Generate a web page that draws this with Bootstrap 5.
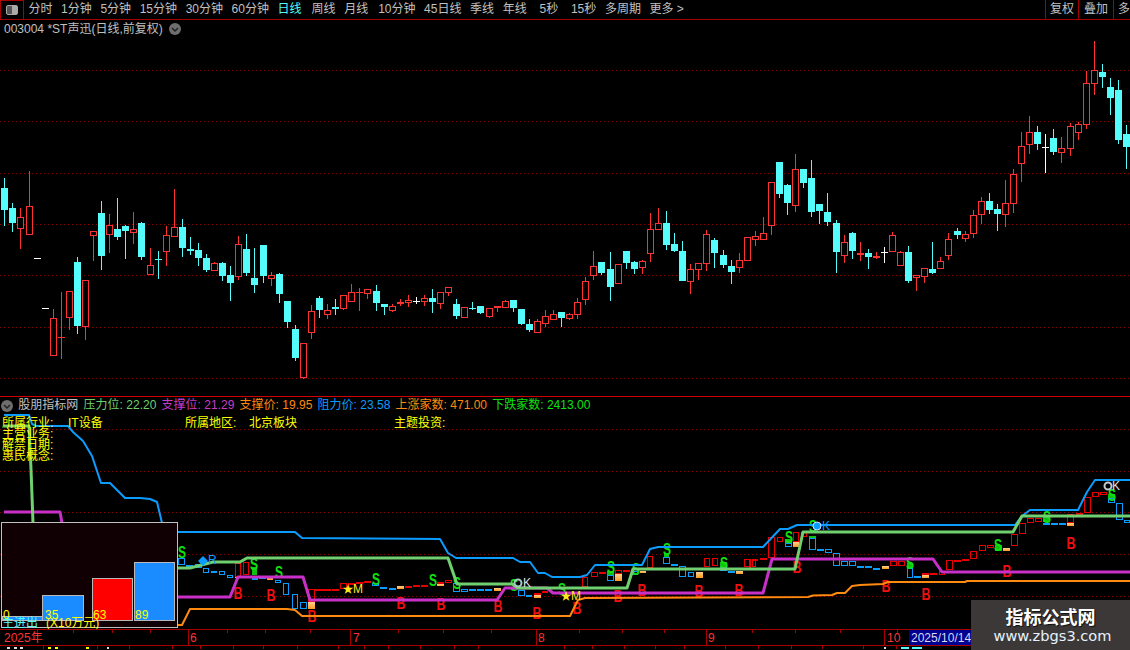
<!DOCTYPE html>
<html lang="zh">
<head>
<meta charset="utf-8">
<title>003004 *ST声迅</title>
<link href="https://cdn.jsdelivr.net/npm/bootstrap@5.3.0/dist/css/bootstrap.min.css" rel="stylesheet">
<style>
html,body{background:#000;margin:0;height:100%;overflow:hidden}
.term{width:1130px;height:650px;background:#000;overflow:hidden;font:12px/16px "Liberation Sans","Noto Sans CJK SC",sans-serif;color:#c0c0c0}
.tbar{height:20px;border-bottom:1px solid #a80000;flex:none}
.tico{width:24px;height:19px;border:1px solid #a80000;border-width:1px 1px 0 1px;flex:none}
.tico i{display:block;width:12px;height:10px;border:1px solid #aaa;border-radius:2px;background:linear-gradient(90deg,#555 55%,#aaa 55%)}
.tbar .nav-link{padding:0 4.3px;color:#c0c0c0;line-height:19px;font-size:12px;white-space:nowrap}
.tbar .nav-link:first-child{padding-left:4.5px}
.tbar .nav-link.on{color:#54fcfc}
.tbar .nudge1{margin-left:1.4px}
.tbar .nudge4{margin-left:4.2px}
.sidebox{flex:none;width:85px}
.tside{border-left:1px solid #a80000;line-height:19px;flex:none;white-space:nowrap;overflow:hidden}
.ts1{width:33px;padding-left:4px}.ts2{width:35px;padding-left:5px}.ts3{width:17px;padding-left:4px}
.mainp{height:376px;flex:none}
.mainp svg,.indp svg,.axisp svg{display:block}
.ttl{left:4px;top:1px;color:#c0c0c0;white-space:nowrap;gap:6px}
.cico{width:12px;height:12px;border-radius:50%;background:#6e6e6e;flex:none}
.cico svg{display:block;width:12px;height:12px}
.inhd{height:18px;border-top:1px solid #d00000;flex:none;padding-left:1px;white-space:nowrap;line-height:17px}
.inhd .itm{margin-left:5.3px}
.cgreen{color:#70d070}.cmag{color:#c83cc8}.corg{color:#ff8a10}.cblue{color:#0a9dff}.cup{color:#ff8a10}.cdn{color:#10e010}
.indp{height:215px;flex:none}
.ymemo{left:2px;top:3.5px;color:#ff0;line-height:11px;white-space:nowrap}
.ymemo .lab1{width:66px}.ymemo .lab2{width:117px}.ymemo .lab3{width:145px}.ymemo .lab4{width:64px}
.axisp{height:20px;flex:none}
.wmark{right:0;bottom:0;width:159px;height:50px;background:#3b3837;color:#fff;text-align:center}
.wmark .w1{font:700 18px/20px "Noto Sans CJK SC",sans-serif;margin-top:6px;text-shadow:1px 1px 1px #111}
.wmark .w2{font:14.6px/20px "DejaVu Sans",sans-serif;color:#e6f2ff;margin-left:4px}
.tS{fill:#10e010;font:700 16.5px "Liberation Sans",sans-serif}
.tB{fill:#f01010;font:700 16.5px "Liberation Sans",sans-serif}
.tK{font:12px "Liberation Sans",sans-serif}
.hlab{fill:#ff0;font:12px "Liberation Sans",sans-serif}
</style>
</head>
<body>
<div class="term d-flex flex-column position-relative">
  <div class="tbar d-flex align-items-stretch">
    <div class="tico d-flex align-items-center justify-content-center"><i></i></div>
    <nav class="nav flex-nowrap flex-grow-1">
      <a class="nav-link" href="#">分时</a><a class="nav-link" href="#">1分钟</a><a class="nav-link" href="#">5分钟</a><a class="nav-link" href="#">15分钟</a><a class="nav-link" href="#">30分钟</a><a class="nav-link" href="#">60分钟</a><a class="nav-link on" href="#">日线</a><a class="nav-link nudge1" href="#">周线</a><a class="nav-link" href="#">月线</a><a class="nav-link nudge1" href="#">10分钟</a><a class="nav-link" href="#">45日线</a><a class="nav-link" href="#">季线</a><a class="nav-link" href="#">年线</a><a class="nav-link nudge4" href="#">5秒</a><a class="nav-link nudge4" href="#">15秒</a><a class="nav-link" href="#">多周期</a><a class="nav-link" href="#">更多 &gt;</a>
    </nav>
    <div class="d-flex sidebox"><div class="tside ts1">复权</div><div class="tside ts2">叠加</div><div class="tside ts3">多</div></div>
  </div>
  <div class="mainp position-relative">
    <svg id="mainsvg" width="1130" height="376" viewBox="0 20 1130 376"></svg>
    <div class="ttl position-absolute d-flex align-items-center"><span>003004 *ST声迅(日线,前复权)</span><span class="cico"><svg viewBox="0 0 12 12"><path d="M3 5l3 3 3-3" fill="none" stroke="#222" stroke-width="1.5"/></svg></span></div>
  </div>
  <div class="inhd d-flex align-items-center">
    <span class="cico"><svg viewBox="0 0 12 12"><path d="M3 5l3 3 3-3" fill="none" stroke="#222" stroke-width="1.5"/></svg></span>
    <span class="itm">股朋指标网</span>
    <span class="itm cgreen">压力位: 22.20</span>
    <span class="itm cmag">支撑位: 21.29</span>
    <span class="itm corg">支撑价: 19.95</span>
    <span class="itm cblue">阻力价: 23.58</span>
    <span class="itm cup">上涨家数: 471.00</span>
    <span class="itm cdn">下跌家数: 2413.00</span>
  </div>
  <div class="indp position-relative">
    <svg id="indsvg" width="1130" height="215" viewBox="0 415 1130 215"></svg>
    <div class="ymemo position-absolute">
      <div class="d-flex"><span class="lab1">所属行业:</span><span class="lab2">IT设备</span><span class="lab4">所属地区:</span><span class="lab3">北京板块</span><span>主题投资:</span></div>
      <div>主营业务:</div>
      <div>解禁日期:</div>
      <div>惠民概念:</div>
    </div>
  </div>
  <div class="axisp"><svg id="axsvg" width="1130" height="20" viewBox="0 630 1130 20"></svg></div>
  <div class="wmark position-absolute"><div class="w1">指标公式网</div><div class="w2">www.zbgs3.com</div></div>
</div>
<script>
const RED='#ff3232',CY='#54fcfc',WH='#ffffff';
const C=[['c',188,210,178,226],['c',208,223,203,232],['r',217,229,208,249],['r',206,235,171,235],['w',258,258,258,258],['w',308,308,308,308],['r',318,356,309,356],['r',337,337,292,359],['r',291,318,291,330],['c',262,326,257,334],
['r',280,327,280,340],['r',231,236,231,261],['c',213,256,201,270],['r',225,235,214,253],['c',229,237,198,240],['c',226,231,225,259],['r',229,233,212,244],['c',223,257,222,260],['r',265,275,248,275],['c',259,259,251,279],
['r',235,252,226,266],['r',227,237,189,237],['c',227,248,219,257],['c',249,250,237,255],['c',250,258,243,266],['c',258,270,254,272],['r',263,271,262,271],['c',263,276,262,281],['c',275,283,266,301],['r',244,277,236,280],
['c',249,273,234,276],['c',278,285,248,293],['c',245,276,245,283],['r',275,279,272,286],['c',274,294,273,303],['c',301,322,301,328],['c',329,358,325,361],['r',343,378,343,379],['r',311,333,305,339],['c',298,310,296,318],
['r',310,315,304,319],['c',307,308,299,315],['r',295,309,295,310],['r',292,302,284,302],['r',292,292,288,311],['r',289,294,289,299],['c',291,303,285,311],['c',304,307,304,315],['r',306,311,304,312],['r',302,304,299,306],
['r',300,303,295,307],['w',301,301,297,304],['r',298,302,295,306],['c',298,302,289,313],['r',292,304,292,309],['r',287,293,287,296],['c',304,316,299,319],['r',307,318,307,318],['c',308,308,302,310],['c',306,313,306,314],
['r',308,317,308,318],['r',306,308,306,312],['r',301,308,300,308],['c',300,308,300,312],['c',309,324,309,325],['c',324,330,319,332],['r',321,333,319,333],['r',316,324,310,327],['r',314,320,310,320],['c',312,318,312,327],
['r',314,319,313,320],['r',302,315,298,319],['r',281,300,277,305],['r',266,276,251,280],['c',262,273,262,275],['c',269,287,252,301],['r',264,284,264,284],['c',251,263,251,269],['c',262,269,261,274],['r',261,268,260,274],
['r',229,254,213,262],['r',223,230,208,230],['c',223,245,211,250],['c',244,251,233,252],['c',251,281,241,281],['r',269,282,264,294],['r',263,270,263,280],['r',234,264,230,271],['c',240,253,238,268],['c',255,265,250,268],
['c',266,272,260,284],['r',260,268,253,273],['r',237,261,237,261],['r',236,240,231,246],['r',233,240,217,240],['r',182,226,182,235],['c',162,194,162,198],['c',185,203,184,215],['r',169,206,154,212],['c',169,183,169,188],
['c',178,212,160,217],['c',204,211,204,224],['c',212,222,193,226],['c',223,252,220,273],['r',242,256,235,263],['c',233,251,232,259],['r',253,255,242,261],['c',253,257,249,269],['r',256,258,252,259],['w',252,252,247,263],
['r',235,252,232,252],['r',252,266,251,266],['c',252,281,246,283],['r',275,278,275,291],['r',268,277,268,283],['c',269,273,242,274],['r',261,269,257,269],['r',239,256,233,260],['c',231,235,228,239],['r',234,239,231,242],
['r',215,234,210,238],['r',201,215,197,224],['c',201,210,193,214],['c',209,214,204,231],['r',203,215,180,227],['r',174,204,169,213],['r',146,164,132,182],['r',132,145,116,154],['c',132,144,126,150],['w',147,147,134,173],
['c',138,152,129,155],['r',148,153,137,163],['r',126,149,123,156],['r',124,133,122,140],['r',83,125,71,129],['r',70,84,41,95],['c',72,77,64,88],['c',87,98,78,115],['c',90,140,80,144],['c',134,147,125,169]];
const rect=(x,y,w,h,f,e='')=>`<rect x="${x}" y="${y}" width="${w}" height="${h}" fill="${f}" ${e}/>`;
const dots=ys=>ys.map(y=>`<line x1="0" x2="1130" y1="${y+.5}" y2="${y+.5}" stroke="#8c0000" stroke-dasharray="1 3" shape-rendering="crispEdges"/>`).join('');
let m=dots([70,121,173,224,275,327,378]);
C.forEach((c,i)=>{const[t,a,b,h,l]=c,cx=Math.round(4.3+8.07*i),col=t=='r'?RED:t=='c'?CY:WH;
 if(l>h)m+=rect(cx,h,1,l-h,col);
 if(b===a)m+=rect(cx-3,a,7,1,col);
 else if(b-a<=2)m+=rect(cx-3,a,7,2,col);
 else if(t=='r')m+=`<rect x="${cx-2.5}" y="${a+.5}" width="6" height="${b-a-1}" fill="#000" stroke="${col}"/>`;
 else m+=rect(cx-3,a,7,b-a,col);
});
document.getElementById('mainsvg').innerHTML=`<g shape-rendering="crispEdges">${m}</g>`;

const B='#0a9dff',R='#e80000';
const G6=[['b',535,133,555,152],['b',558,152,580,152],['b',585,150,605,163],['b',610,163,628,178],['b',634,170,652,178],['b',658,170,676,184],['b',682,184,700,193],['o',706,185,716,193],['r',706,148,724,190],['r',730,145,748,183],['g',755,145,772,183],['b',755,193,775,193],['b',778,185,798,195],['o',800,185,820,197],['b',826,197,844,208],['b',850,208,868,242],['b',877,241,895,284],['b',900,265,920,284],['o',925,265,945,285],['r',925,225,945,265],['r',946,226,968,226],['r',970,226,992,226],['r',995,224,1018,224],['r',1020,208,1040,224],['r',1045,207,1065,207],['r',1068,205,1090,205],['r',1092,200,1112,206],['b',1116,208,1136,217]];
const G7=[['b',15,218,35,224],['b',42,221,62,221],['o',66,217,88,225],['r',90,215,110,215],['r',113,214,135,214],['r',138,212,160,212],['r',185,205,207,210],['o',185,210,207,215],['r',210,199,230,206],['b',235,207,255,233],['b',259,224,278,233],['b',282,224,302,224],['b',306,224,326,230],['b',330,224,350,230],['o',357,221,377,231],['r',380,215,400,220],['b',430,228,450,245],['b',453,244,472,250],['o',477,243,497,251],['r',477,238,497,243],['r',502,232,520,238],['r',597,215,617,220],['r',622,190,640,218],['r',648,173,668,190],['r',672,173,692,181],['b',697,182,717,200],['g',697,165,717,182],['o',720,180,740,200],['r',720,169,740,180],['r',745,168,765,168],['b',770,170,790,184],['o',795,170,812,176],['r',817,127,835,162],['r',840,122,860,127],['g',866,115,882,129],['b',865,129,885,149],['b',888,149,908,155],['b',913,155,932,190],['b',938,175,958,190],['o',963,173,983,191],['r',988,133,1006,160],['r',1012,133,1030,157],['g',1036,133,1056,160],['b',1036,160,1056,172],['b',1060,172,1080,178],['o',1083,171,1103,179],['r',1108,136,1126,160],['r',1132,136,1142,160]];
const G8=[['r',-3,270,3,297],['r',5,270,25,270],['r',30,268,50,268],['r',55,205,75,268],['r',80,205,98,220],['g',106,200,125,222],['b',105,222,125,233],['o',130,220,148,233],['r',130,190,148,220],['r',152,190,172,205],['b',178,207,198,242],['g',178,195,198,207],['b',202,240,222,240],['b',226,240,245,253],['b',250,253,270,290],['b',274,277,294,290],['b',298,277,318,290],['b',322,290,342,290],['b',346,292,365,298],['b',370,296,390,296],['o',396,292,416,300],['r',420,277,440,290],['r',445,277,465,290],['g',470,270,490,298],['b',470,298,490,326],['b',493,320,512,326],['o',516,318,536,326],['r',516,311,536,317],['r',541,311,561,317],['r',566,305,586,317],['r',588,274,608,302],['r',612,272,632,272],['r',637,269,657,269],['r',660,247,680,269],['r',688,229,708,247],['r',712,229,732,238],['g',736,215,756,245],['o',760,236,780,245],['r',784,196,804,232],['r',808,163,828,196],['r',832,148,852,163],['r',856,148,876,160],['g',880,132,900,160],['b',880,162,900,162],['b',904,163,924,169],['b',928,163,948,169],['o',952,163,972,171],['r',952,136,972,163],['r',978,132,998,132],['r',1003,85,1022,133],['r',1027,70,1047,85],['r',1050,70,1070,78],['g',1075,68,1095,88],['b',1075,88,1095,103],['b',1098,103,1118,154],['b',1122,154,1140,163]];
const boxes=(g,ox,oy)=>g.map(([t,a,b,c,d])=>{const x1=Math.round(ox+a/3),y1=Math.round(oy+b/3),x2=Math.round(ox+c/3),y2=Math.round(oy+d/3);
 if(t=='o')return `<rect x="${x1}" y="${y1}" width="${x2-x1}" height="${y2-y1}" fill="url(#og)"/>`;
 if(t=='g'){const gy=Math.round(y1+(y2-y1)*.4);return rect(x1,gy,x2-x1,y2-gy,'#10c010');}
 const col=t=='b'?B:R;
 if(y1==y2)return rect(x1,y1,x2-x1,2,col);
 return `<rect x="${x1+.5}" y="${y1+.5}" width="${x2-x1-1}" height="${y2-y1-1}" fill="none" stroke="${col}"/>`;}).join('');
let s=`<defs><linearGradient id="og" x1="0" x2="0" y1="0" y2="1"><stop offset="0" stop-color="#ffd090"/><stop offset="1" stop-color="#ff9a20"/></linearGradient></defs>`;
s+=`<g shape-rendering="crispEdges">${dots([430,472,513,555,597])}${boxes(G6,0,515)}${boxes(G7,375,515)}${boxes(G8,750,470)}</g>`;
const lab=(c,t,w,x,y)=>`<text class="${c}" x="${x-w/2}" y="${y}" dy="6" textLength="${w}" lengthAdjust="spacingAndGlyphs">${t}</text>`;
[[238,594],[271,596],[312,617],[401,604],[441,605],[498,607],[537,614],[577,609],[618,597],[642,591],[699,592],[739,591],[797,568],[886,587],[926,595],[1007,572],[1071,544]].forEach(p=>s+=lab('tB','B',9,p[0],p[1]));
[[182,553],[254,565],[279,573],[376,580],[433,581],[457,584],[514,586],[562,590],[611,568],[636,570],[667,550],[724,564],[789,538],[813,527],[910,564],[998,546],[1047,518],[1112,496]].forEach(p=>s+=lab('tS','S',8,p[0],p[1]));
const pl=(pts,col,w)=>`<polyline points="${pts.map(p=>p.join(',')).join(' ')}" fill="none" stroke="${col}" stroke-width="${w}" stroke-linejoin="round"/>`;
s+=pl([[178,626],[182,626],[190,610],[287,610],[295,611],[302,617],[570,617],[578,601],[585,599],[808,598],[813,596.5],[832,596],[837,594],[845,594],[852,587],[860,586],[883,585],[888,583],[965,583],[967,582],[1130,582]],'#ff8a10',2);
s+=pl([[4,513],[60,513],[62,524]],'#c830c8',3);
s+=pl([[178,598],[230,598],[238,578],[303,578],[310,601],[497,601],[505,589],[547,589],[553,594],[763,594],[772,560],[933,560],[942,573],[1130,573]],'#c830c8',3);
s+=pl([[4,416],[29,416],[32,425],[36,427],[68,427],[73,433],[83,442],[92,457],[97,472],[101,484],[110,484],[125,499],[140,499],[150,500],[157,503],[162,524]],B,2);
s+=pl([[178,533],[295,533],[302,539],[440,540],[448,554],[456,559],[513,559],[520,563],[530,563],[538,574],[545,574],[552,578],[580,578],[587,576],[595,566],[642,566],[650,550],[658,548],[763,548],[780,530],[788,530],[797,526],[1015,526],[1022,517],[1030,511],[1078,511],[1087,493],[1095,481],[1130,481]],B,2);
s+=pl([[4,427],[29,427],[31,470],[33,524]],'#70d070',3);
s+=pl([[178,569],[190,569],[213,563],[240,563],[247,559],[448,559],[457,585],[512,585],[518,589],[627,589],[633,570],[795,570],[803,533],[1013,533],[1022,517],[1130,517]],'#70d070',3);
// markers
const txt=(t,x,y,c)=>`<text class="tK" x="${x}" y="${y}" fill="${c}">${t}</text>`;
s+=`<text x="348" y="594" text-anchor="middle" font-size="11" fill="#ffe820">★</text>`+txt('M',353,594,'#ffe820');
s+=`<text x="566" y="601" text-anchor="middle" font-size="11" fill="#ffe820">★</text>`+txt('M',571,601,'#ffe820');
s+=`<circle cx="518" cy="584" r="3.5" fill="none" stroke="#a8c8c8" stroke-width="2"/>`+txt('K',523,588,'#e0e0e0');
s+=`<circle cx="817" cy="527" r="4" fill="#0a9dff" stroke="#bfe6ff"/>`+txt('K',822,531,B);
s+=`<circle cx="1108" cy="487" r="3.5" fill="none" stroke="#c0c8c8" stroke-width="2"/>`+txt('K',1112,491,'#e0e0e0');
s+=`<path d="M203 557l5 5-5 5-5-5z" fill="#0a9dff"/>`+txt('R',208,565,B);
// histogram
s+=`<rect x="1.5" y="523.5" width="176" height="105" fill="#100004" stroke="#c0c0c0"/>`;
[[2,617,40,'#1a8cff'],[42,596,41,'#1a8cff'],[92,579,40,'#ff0000'],[134,563,40,'#1a8cff']].forEach(b=>s+=`<rect x="${b[0]+.5}" y="${b[1]+.5}" width="${b[2]}" height="${621-b[1]}" fill="${b[3]}" stroke="#b8b8b8"/>`);
[['0',3,620],['35',45,620],['63',93,620],['89',135,620]].forEach(t=>s+=`<text class="hlab" x="${t[1]}" y="${t[2]}">${t[0]}</text>`);
s+=`<text x="2" y="628" fill="#54fcfc" font-size="12" font-family="Noto Sans CJK SC">主进出</text><text x="46" y="628" fill="#ff0" font-size="12" font-family="Liberation Sans,Noto Sans CJK SC">(X10万元)</text>`;
document.getElementById('indsvg').innerHTML=s;

// axis
let a=rect(0,630,1130,1,'#a80000')+rect(0,646,1130,1,'#a80000');
[37,73,112,150,227,265,310,398,443,491,579,622,664,752,795,840,897].forEach(x=>a+=rect(x,631,1,3,'#a80000'));
[188,350,536,706,884].forEach(x=>a+=rect(x,631,1,15,'#a80000'));
[['2025年',4],['6',190],['7',353],['8',538],['9',708],['10',887]].forEach(t=>a+=`<text x="${t[1]}" y="643" fill="${RED}" font-size="12" font-family="Liberation Sans,Noto Sans CJK SC">${t[0]}</text>`);
a+=rect(909,631,63,15,'#000090')+`<text x="911" y="643" fill="#d8d8f0" font-size="12" font-family="Liberation Sans">2025/10/14</text>`;
[43,97,129,172,200,233,263,297,338,364,388,420,454,478,564,592,624,655,684,725,758,791,822,863,896].forEach(x=>a+=rect(x,647,1,3,'#a80000'));
[[7,3],[14,3],[20,3],[48,3],[55,3],[86,3],[107,2],[884,2]].forEach(p=>a+=rect(p[0],648,p[1],2,p[0]<30||p[0]>100?'#ddd':'#ff0'));
a+=rect(901,648,8,2,'#54fcfc')+rect(912,648,10,2,'#54fcfc');
document.getElementById('axsvg').innerHTML=`<g shape-rendering="crispEdges">${a}</g>`;
</script>
<script src="https://cdn.jsdelivr.net/npm/bootstrap@5.3.0/dist/js/bootstrap.bundle.min.js"></script>
</body>
</html>
